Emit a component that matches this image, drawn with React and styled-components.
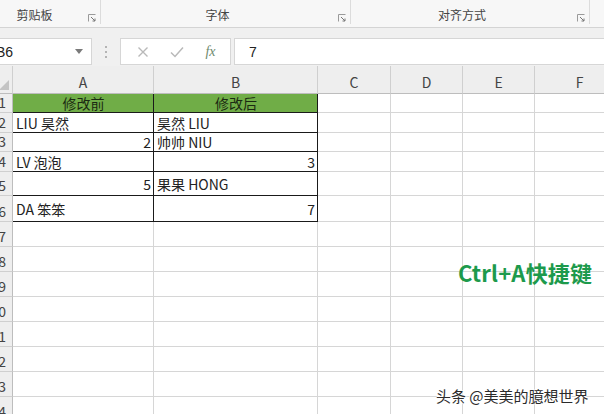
import styled, { createGlobalStyle } from "styled-components";

const GlobalStyle = createGlobalStyle`
  * { box-sizing: border-box; }
  body {
    margin: 0;
    background: #fff;
    overflow: hidden;
    font-family: "Noto Sans CJK SC", "Noto Sans", sans-serif;
  }
`;

const Screen = styled.div`
  position: relative;
  width: 604px;
  height: 414px;
  overflow: hidden;
  background: #fff;
`;

/* ribbon */
const Ribbon = styled.div`
  display: flex;
  height: 28px;
  margin-left: -15px;
  background: #f7f7f7;
  border-bottom: 1px solid #d4d4d4;
`;

const Group = styled.div`
  display: flex;
  align-items: stretch;
  flex: 0 0 ${(p) => p.$w}px;
  border-right: 1px solid #dcdcdc;
  margin-bottom: 3px;
`;

const GroupLabel = styled.div`
  flex: 1;
  text-align: center;
  font-size: 12px;
  line-height: 30px;
  color: #444;
`;

const Launcher = styled.div`
  flex: 0 0 16px;
  display: flex;
  align-items: flex-end;
  justify-content: center;
  padding-bottom: 2px;
`;

const Band = styled.div`
  height: 9px;
  background: #f0f0f0;
`;

/* formula bar */
const FormulaBar = styled.div`
  display: flex;
  align-items: center;
  height: 29px;
  background: #f0f0f0;
`;

const Box = styled.div`
  height: 27px;
  background: #fff;
  border: 1px solid #d6d6d6;
  display: flex;
  align-items: center;
`;

const NameBox = styled(Box)`
  flex: 0 0 106px;
  margin-left: -14px;
  padding-left: 9px;
  font-family: "Liberation Sans", sans-serif;
  font-size: 14px;
  color: #222;
  justify-content: space-between;
  padding-right: 8px;
`;

const Grip = styled.div`
  flex: 0 0 28px;
  display: flex;
  flex-direction: column;
  align-items: center;
  gap: 3px;
  span {
    width: 2px;
    height: 2px;
    background: #b4b4b4;
  }
`;

const FuncBox = styled(Box)`
  flex: 0 0 111px;
  justify-content: space-around;
  padding: 0 4px 0 6px;
`;

const Fx = styled.span`
  font-family: "Liberation Serif", serif;
  font-style: italic;
  font-size: 14px;
  color: #6e8a6e;
`;

const FormulaInput = styled(Box)`
  flex: 1;
  margin-left: 3px;
  padding-left: 14px;
  font-family: "Liberation Sans", sans-serif;
  font-size: 14px;
  color: #222;
  border-right: none;
`;

/* sheet */
const Sheet = styled.div`
  display: grid;
  margin-left: -15px;
  grid-template-columns: 28px 141px 164px 73px 72px 72px 90px;
  grid-template-rows: 28px 19px 20px 19px 20px 24px 26px repeat(8, 25px);
  font-size: 14px;
  color: #222;
`;

const HeadCell = styled.div`
  display: flex;
  align-items: flex-end;
  justify-content: center;
  padding-bottom: 1px;
  background: #eeeeee;
  border-right: 1px solid #cfcfcf;
  border-bottom: 1px solid #bdbdbd;
  color: #444;
  line-height: 20px;
`;

const Corner = styled(HeadCell)`
  justify-content: flex-end;
  padding: 0 3px 3px 0;
`;

const RowHead = styled.div`
  display: flex;
  align-items: flex-end;
  justify-content: flex-end;
  padding: 0 6px 0 0;
  background: #eeeeee;
  border-right: 1px solid #bdbdbd;
  border-bottom: 1px solid #cfcfcf;
  color: #444;
  line-height: 20px;
`;

const Cell = styled.div`
  display: flex;
  align-items: center;
  justify-content: ${(p) => (p.$right ? "flex-end" : p.$center ? "center" : "flex-start")};
  padding: 0 2px 0 3px;
  white-space: nowrap;
  overflow: hidden;
  background: ${(p) => (p.$green ? "#70ad47" : "#fff")};
  border-right: 1px solid ${(p) => (p.$boxed ? "#1a1a1a" : "#d6d6d6")};
  border-bottom: 1px solid ${(p) => (p.$boxed ? "#1a1a1a" : "#d6d6d6")};
  color: ${(p) => (p.$green ? "#1b2a12" : "#222")};
`;

/* overlays */
const Caption = styled.div`
  position: absolute;
  left: 458px;
  top: 256px;
  font-size: 22px;
  font-weight: 700;
  color: #1d9a4c;
  letter-spacing: 0.2px;
`;

const Watermark = styled.div`
  position: absolute;
  left: 436px;
  top: 385px;
  font-size: 15px;
  color: #2b2b2b;
  text-shadow: 1px 0 0 #fff, -1px 0 0 #fff, 0 1px 0 #fff, 0 -1px 0 #fff;
`;

function LaunchIcon() {
  return (
    <svg width="8" height="8" viewBox="0 0 8 8">
      <path d="M0.5 7.5V0.5H7.5" fill="none" stroke="#9a9a9a" strokeWidth="1" />
      <path d="M3 3L7 7M7 4.5V7H4.5" fill="none" stroke="#777" strokeWidth="1" />
    </svg>
  );
}

const columns = ["A", "B", "C", "D", "E", "F"];

const tableRows = [
  { a: "修改前", b: "修改后", head: true },
  { a: "LIU 昊然", b: "昊然 LIU" },
  { a: "2", aNum: true, b: "帅帅 NIU" },
  { a: "LV 泡泡", b: "3", bNum: true },
  { a: "5", aNum: true, b: "果果 HONG" },
  { a: "DA 笨笨", b: "7", bNum: true },
];

export default function App() {
  const rows = [];
  for (let r = 1; r <= 14; r++) {
    const data = tableRows[r - 1];
    rows.push(<RowHead key={`h${r}`}>{r}</RowHead>);
    columns.forEach((col, i) => {
      let text = "";
      let right = false;
      if (data && i === 0) {
        text = data.a;
        right = data.aNum;
      } else if (data && i === 1) {
        text = data.b;
        right = data.bNum;
      }
      rows.push(
        <Cell
          key={`${col}${r}`}
          $boxed={!!data && i < 2}
          $green={!!data?.head && i < 2}
          $center={!!data?.head}
          $right={right}
        >
          {text}
        </Cell>
      );
    });
  }

  return (
    <Screen>
      <GlobalStyle />
      <Ribbon>
        <Group $w={116}>
          <GroupLabel>剪贴板</GroupLabel>
          <Launcher>
            <LaunchIcon />
          </Launcher>
        </Group>
        <Group $w={250}>
          <GroupLabel>字体</GroupLabel>
          <Launcher>
            <LaunchIcon />
          </Launcher>
        </Group>
        <Group $w={239}>
          <GroupLabel>对齐方式</GroupLabel>
          <Launcher>
            <LaunchIcon />
          </Launcher>
        </Group>
      </Ribbon>
      <Band />
      <FormulaBar>
        <NameBox>
          <span>B6</span>
          <svg width="8" height="5" viewBox="0 0 8 5">
            <path d="M0 0H8L4 5Z" fill="#7a7a7a" />
          </svg>
        </NameBox>
        <Grip>
          <span />
          <span />
          <span />
        </Grip>
        <FuncBox>
          <svg width="12" height="12" viewBox="0 0 12 12">
            <path d="M1.5 1.5L10.5 10.5M10.5 1.5L1.5 10.5" stroke="#b9b9b9" strokeWidth="1.4" />
          </svg>
          <svg width="14" height="12" viewBox="0 0 14 12">
            <path d="M1 6.5L5 10.5L13 1.5" fill="none" stroke="#b9b9b9" strokeWidth="1.5" />
          </svg>
          <Fx>fx</Fx>
        </FuncBox>
        <FormulaInput>7</FormulaInput>
      </FormulaBar>
      <Sheet>
        <Corner>
          <svg width="10" height="10" viewBox="0 0 10 10">
            <path d="M10 0V10H0Z" fill="#c4c4c4" />
          </svg>
        </Corner>
        {columns.map((c) => (
          <HeadCell key={c}>{c}</HeadCell>
        ))}
        {rows}
      </Sheet>
      <Caption>Ctrl+A快捷键</Caption>
      <Watermark>头条 @美美的臆想世界</Watermark>
    </Screen>
  );
}
